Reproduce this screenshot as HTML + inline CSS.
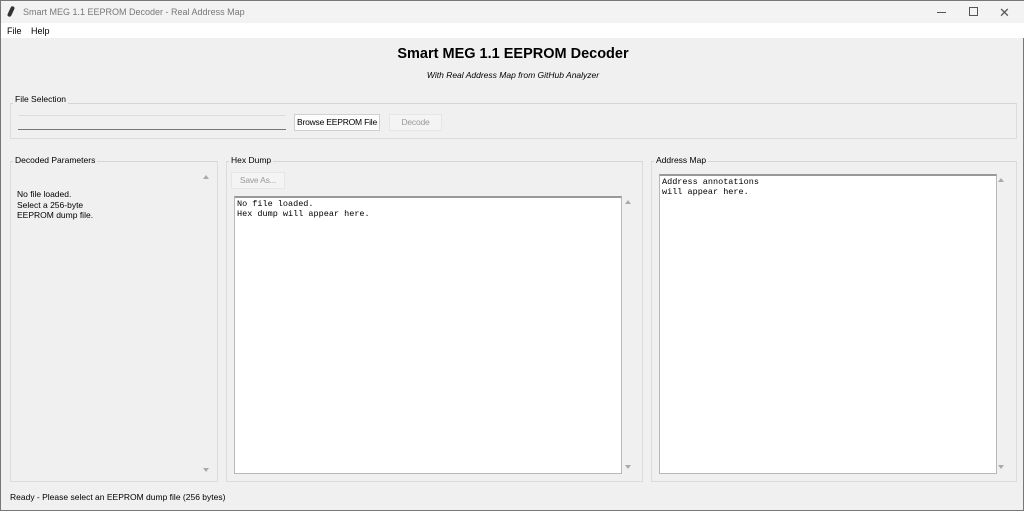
<!DOCTYPE html>
<html><head><style>
*{margin:0;padding:0;box-sizing:border-box}
body{width:1024px;height:511px;background:#f0f0f0;font-family:"Liberation Sans",sans-serif;font-size:8.5px;color:#000;position:relative;overflow:hidden;border:1px solid #777}
.a{position:absolute;white-space:nowrap}
.frame{position:absolute;border:1px solid #dcdcdc;border-top-color:#d5d5d5}
.lbl{position:absolute;background:#f0f0f0;padding:0 2px;font-size:8.5px;white-space:nowrap}
.btn{position:absolute;background:#fdfdfd;border:1px solid #d0d0d0;font-size:8.5px;text-align:center;line-height:15px;white-space:nowrap;letter-spacing:-0.2px}
.dis{background:#f4f4f4;color:#999;border-color:#e6e6e6}
.txt{position:absolute;background:#fff;border:1px solid #b8b8b8;border-top:2px solid #999;font-family:"Liberation Mono",monospace;font-size:8.5px;line-height:10px;padding:1px 2px}
.up,.dn{position:absolute;width:0;height:0;border-left:3px solid transparent;border-right:3px solid transparent}
.up{border-bottom:4px solid #aaa}.dn{border-top:4px solid #aaa}
</style></head><body>
<div class="a" style="left:0;top:0;width:1024px;height:22px;background:#f3f3f3"></div>
<div class="a" style="left:8px;top:5px;width:4px;height:11px;background:#333;transform:rotate(25deg);border-radius:2px"></div>
<div class="a" style="left:22px;top:6px;font-size:9px;color:#777">Smart MEG 1.1 EEPROM Decoder - Real Address Map</div>
<div class="a" style="left:936px;top:11px;width:9px;height:1px;background:#555"></div>
<div class="a" style="left:968px;top:6px;width:9px;height:9px;border:1px solid #555"></div>
<div class="a" style="left:998px;top:4px;font-size:13px;color:#555">✕</div>
<div class="a" style="left:0;top:22px;width:1024px;height:15px;background:#fff"></div>
<div class="a" style="left:6px;top:25px;font-size:9px">File</div>
<div class="a" style="left:30px;top:25px;font-size:9px">Help</div>
<div class="a" style="left:0;top:45px;width:1024px;text-align:center;font-weight:bold;font-size:14.5px">Smart MEG 1.1 EEPROM Decoder</div>
<div class="a" style="left:0;top:69px;width:1024px;text-align:center;font-style:italic;font-size:8.5px">With Real Address Map from GitHub Analyzer</div>

<div class="frame" style="left:9px;top:102px;width:1007px;height:36px"></div>
<div class="lbl" style="left:12px;top:93px">File Selection</div>
<div class="a" style="left:17px;top:114px;width:268px;height:15px;background:#f0f0f0;border-bottom:1px solid #777;border-top:1px solid #ddd"></div>
<div class="btn" style="left:293px;top:113px;width:86px;height:17px">Browse EEPROM File</div>
<div class="btn dis" style="left:388px;top:113px;width:53px;height:17px">Decode</div>

<div class="frame" style="left:9px;top:160px;width:208px;height:321px"></div>
<div class="lbl" style="left:12px;top:154px">Decoded Parameters</div>
<div class="up" style="left:202px;top:174px"></div><div class="dn" style="left:202px;top:467px"></div>
<div class="a" style="left:16px;top:188px;line-height:10.5px;font-size:8.5px">No file loaded.<br>Select a 256-byte<br>EEPROM dump file.</div>

<div class="frame" style="left:225px;top:160px;width:417px;height:321px"></div>
<div class="lbl" style="left:228px;top:154px">Hex Dump</div>
<div class="btn dis" style="left:230px;top:171px;width:54px;height:17px">Save As...</div>
<div class="txt" style="left:233px;top:195px;width:388px;height:278px">No file loaded.<br>Hex dump will appear here.</div>
<div class="up" style="left:624px;top:199px"></div><div class="dn" style="left:624px;top:464px"></div>

<div class="frame" style="left:650px;top:160px;width:366px;height:321px"></div>
<div class="lbl" style="left:653px;top:154px">Address Map</div>
<div class="txt" style="left:658px;top:173px;width:338px;height:300px">Address annotations<br>will appear here.</div>
<div class="up" style="left:997px;top:177px"></div><div class="dn" style="left:997px;top:464px"></div>

<div class="a" style="left:9px;top:491px;font-size:8.5px">Ready - Please select an EEPROM dump file (256 bytes)</div>
</body></html>
